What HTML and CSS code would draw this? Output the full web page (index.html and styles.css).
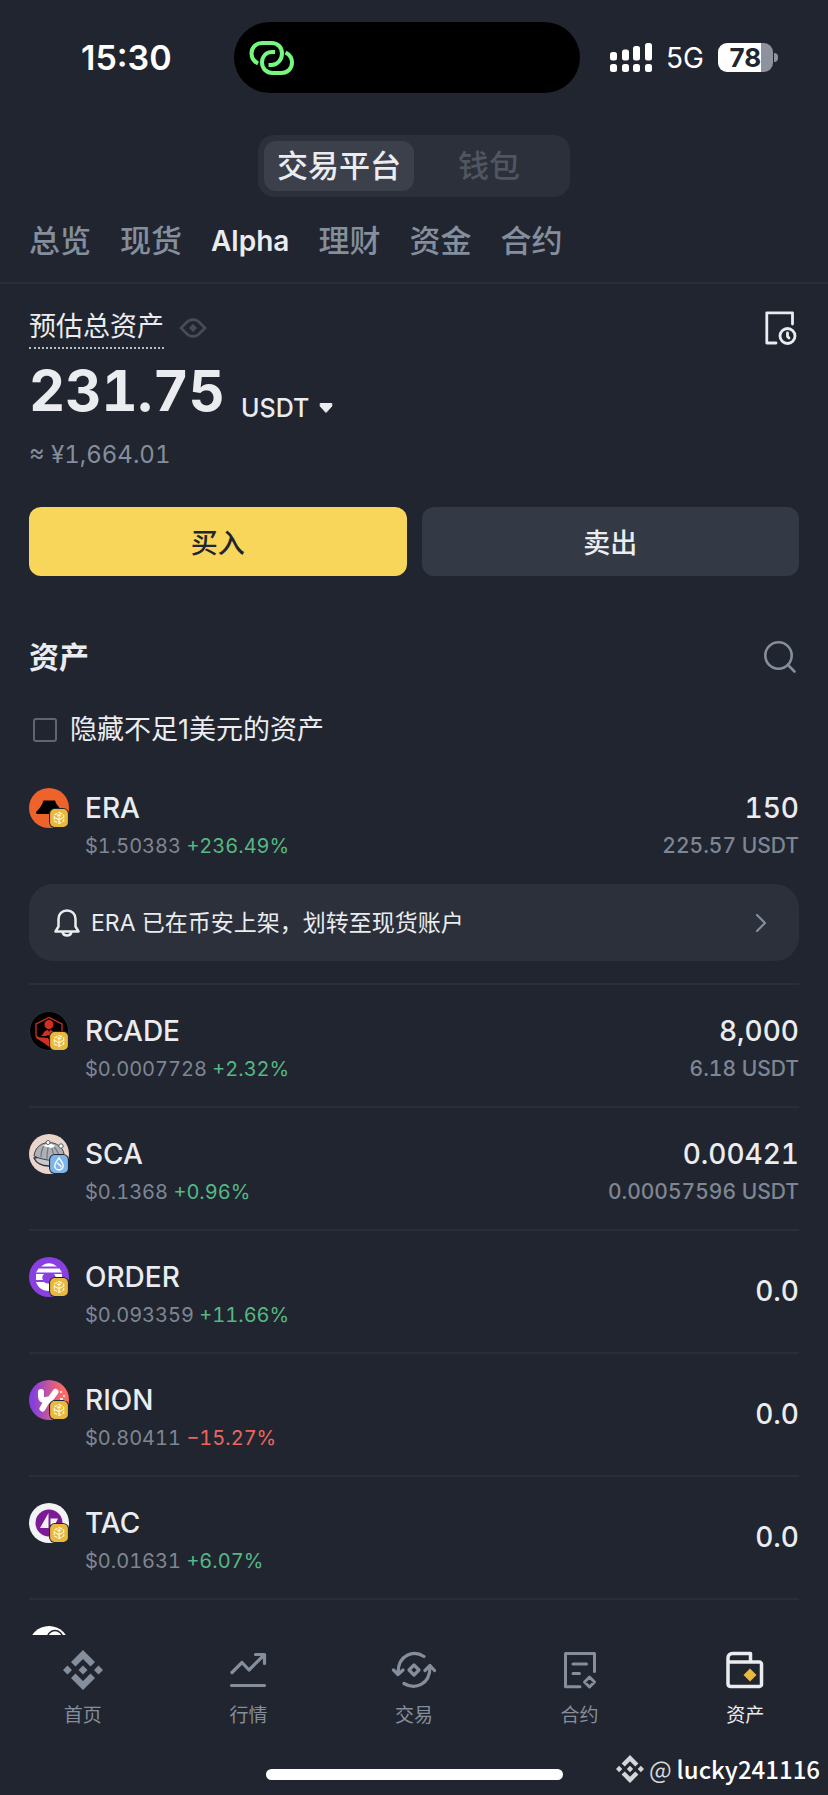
FILE: index.html
```html
<!DOCTYPE html>
<html lang="zh-CN">
<head>
<meta charset="utf-8">
<meta name="viewport" content="width=device-width, initial-scale=1">
<title>资产</title>
<link rel="stylesheet" href="styles.css">
</head>
<body>
<svg class="sprite" aria-hidden="true">
  <symbol id="bnb-badge" viewBox="0 0 18 18">
    <rect x="1" y="1" width="16" height="16" rx="4" fill="#e8b93c"/>
    <path d="M9 4 13.200 6.300v5.400L9 14 4.800 11.700V6.300Z" fill="none" stroke="#fff6d8" stroke-width="1.100" stroke-dasharray="3.200 1"/>
    <path d="M9 5.500 11.200 6.800 9 8 6.800 6.800ZM8.300 8.500h1.400v4.500H8.300ZM5.500 8l2.500 1.400v1.300L5.500 9.300ZM12.500 8 10 9.400v1.300L12.500 9.300Z" fill="#fff6d8"/>
  </symbol>
  <symbol id="sui-badge" viewBox="0 0 18 18">
    <rect x="1" y="1" width="16" height="16" rx="4" fill="#7fb6ea"/>
    <path d="M9 3.500C7.500 6 5.200 8 5.200 10.600a3.800 3.800 0 0 0 7.600 0C12.800 8 10.500 6 9 3.500Z" fill="none" stroke="#fff" stroke-width="1.200"/>
    <path d="M7.500 8c1 2 3.500 1.500 3.500 4.200" fill="none" stroke="#fff" stroke-width="1.200"/>
  </symbol>
  <symbol id="diamond-logo" viewBox="0 0 40 40">
    <path d="M20 0 32 12 27.500 16.500 20 9 12.500 16.500 8 12ZM20 40 8 28 12.500 23.500 20 31 27.500 23.500 32 28ZM4.500 15.500 9 20 4.500 24.500 0 20ZM35.500 15.500 40 20 35.500 24.500 31 20ZM20 15.500 24.500 20 20 24.500 15.500 20Z" fill="currentColor"/>
  </symbol>
</svg>

<div class="app">
  <header class="status">
    <div class="status-time"><time>15:30</time></div>
    <div class="island">
      <svg width="46" height="36" viewBox="0 0 46 36" fill="none" stroke="#76f77e" stroke-width="4" stroke-linecap="butt">
        <path d="M9 23.500C5 21.500 2.500 18 2.500 13.500 2.500 7.500 7 3 13 3h9.500C29 3 33 7.500 33 13.500S28.500 25 22.500 25h-3"/>
        <path d="M26 12h-3C17 12 13 16.500 13 22.500S17.500 33 23.500 33h9C38.500 33 43 28.500 43 22.500c0-4.500-2.500-8-6.500-10"/>
      </svg>
    </div>
    <div class="status-right">
      <svg width="42" height="29" viewBox="0 0 42 29" fill="#fff">
        <rect y="9" width="7" height="8.500" rx="2.500"/><rect x="12" y="6.500" width="7" height="11" rx="2.500"/><rect x="23" y="3" width="7" height="14.500" rx="2.500"/><rect x="35" width="7" height="17.500" rx="2.500"/>
        <rect y="21" width="7" height="8" rx="2.500"/><rect x="12" y="21" width="7" height="8" rx="2.500"/><rect x="23" y="21" width="7" height="8" rx="2.500"/><rect x="35" y="21" width="7" height="8" rx="2.500"/>
      </svg>
      <span class="network">5G</span>
      <span class="battery"><span class="battery-level">78</span></span>
    </div>
  </header>

  <div class="segment-wrap">
    <div class="segment">
      <button class="segment-item segment-active" type="button">交易平台</button>
      <button class="segment-item" type="button">钱包</button>
    </div>
  </div>

  <nav class="tabs">
    <a class="tab" href="#overview">总览</a>
    <a class="tab" href="#spot">现货</a>
    <a class="tab tab-active" href="#alpha">Alpha</a>
    <a class="tab" href="#earn">理财</a>
    <a class="tab" href="#funding">资金</a>
    <a class="tab" href="#futures">合约</a>
  </nav>

  <main class="content">
    <section class="summary">
      <div class="summary-head">
        <span class="summary-label">预估总资产</span>
        <button class="icon-button eye" type="button" aria-label="隐藏余额">
          <svg width="28" height="20" viewBox="0 0 28 20" fill="none" stroke="#474d57" stroke-width="2.600"><path d="M2 10 8.500 3.500C11.500 1 16.500 1 19.500 3.500L26 10 19.500 16.500C16.500 19 11.500 19 8.500 16.500Z"/><path d="M14 6 18 10 14 14 10 10Z" fill="#474d57" stroke="none"/></svg>
        </button>
        <button class="icon-button history" type="button" aria-label="历史记录">
          <svg width="32" height="34" viewBox="0 0 32 34" fill="none" stroke="#eaecef" stroke-width="2.800" stroke-linecap="round" stroke-linejoin="round"><path d="M11 32H1.800V1.800H27.500V13"/><circle cx="22.500" cy="25" r="7.500"/><path d="M22.500 22V25.500l1.500 1.500"/></svg>
        </button>
      </div>
      <div class="balance">
        <span class="balance-value">231.75</span>
        <label class="currency">
          <select class="currency-select" aria-label="计价货币"><option>USDT</option></select>
          <svg width="14" height="10" viewBox="0 0 14 10" fill="#eaecef"><path d="M1.200.5h11.600v2.700L7 9.500 1.200 3.200Z" stroke="#eaecef" stroke-linejoin="round"/></svg>
        </label>
      </div>
      <p class="fiat">≈ ¥1,664.01</p>
      <div class="actions">
        <button class="action action-buy" type="button">买入</button>
        <button class="action action-sell" type="button">卖出</button>
      </div>
    </section>

    <section class="assets">
      <div class="assets-head">
        <h2 class="assets-title">资产</h2>
        <button class="icon-button" type="button" aria-label="搜索">
          <svg width="34" height="34" viewBox="0 0 34 34" fill="none" stroke="#848e9c" stroke-width="2.600" stroke-linecap="round"><circle cx="15.500" cy="15.500" r="13.200"/><path d="M25 25 31.500 31.500"/></svg>
        </button>
      </div>
      <label class="filter"><input class="filter-box" type="checkbox"><span>隐藏不足1美元的资产</span></label>

      <ul class="list">
        <li class="row">
          <div class="coin">
            <svg width="40" height="40" viewBox="0 0 40 40"><circle cx="20" cy="20" r="20" fill="#ee622b"/><path d="M14.500 12.500h11.500c.8 3.500 3.500 5.500 5.500 9v4.500H8.500c-1.500 0-1.800-1.500-1-2.500 3-3 5.500-6 7-11Z"/></svg>
            <svg class="coin-badge" width="20" height="20"><use href="#bnb-badge"/></svg>
          </div>
          <div class="coin-text"><h3 class="name">ERA</h3><p class="sub">$1.50383 <span class="up">+236.49%</span></p></div>
          <div class="holding"><p class="name">150</p><p class="value">225.57 USDT</p></div>
          <a class="notice" href="#transfer">
            <svg width="26" height="28" viewBox="0 0 26 28" fill="none" stroke="#eaecef" stroke-width="2.500" stroke-linejoin="round"><path d="M1.500 22.500 4.500 17.500V10C4.500 5 8 1.500 13 1.500S21.500 5 21.500 10v7.500l3 5Z"/><path d="M8.500 23c.5 2.500 2 3.500 4.500 3.500s4-1 4.500-3.500"/></svg>
            <span class="notice-text">ERA 已在币安上架，划转至现货账户</span>
            <svg width="12" height="20" viewBox="0 0 12 20" fill="none" stroke="#848e9c" stroke-width="2.200" stroke-linecap="round" stroke-linejoin="round"><path d="M2 2 10 10 2 18"/></svg>
          </a>
        </li>
        <li class="row">
          <div class="coin">
            <svg width="40" height="40" viewBox="0 0 40 40"><circle cx="20" cy="20" r="19.500" stroke="#2b313c"/><path d="M7 25V13L20 6.500 33 13V25L20 35Z" fill="none" stroke="#d22f22" stroke-width="1.300"/><path d="M20 9a4.500 4.500 0 1 1-.1 9 4.500 4.500 0 0 1 .1-9ZM11 25c4 0 2-5 8-6l1 2 1-2c5 1 3 4 5 5l-5 1-2-1-2 1ZM7 26l12 1 4 7-3 1-13-8Z" fill="#d22f22"/></svg>
            <svg class="coin-badge" width="20" height="20"><use href="#bnb-badge"/></svg>
          </div>
          <div class="coin-text"><h3 class="name">RCADE</h3><p class="sub">$0.0007728 <span class="up">+2.32%</span></p></div>
          <div class="holding"><p class="name">8,000</p><p class="value">6.18 USDT</p></div>
        </li>
        <li class="row">
          <div class="coin">
            <svg width="40" height="40" viewBox="0 0 40 40"><circle cx="20" cy="20" r="20" fill="#ead5cb"/><path d="M5 24c2 5 8 8 15 8s12-3 14-8l-4-4Z" fill="#c7c9cd" stroke="#2e3340" stroke-width="1.300"/><path d="M5 22C6 13 13 8.500 20 8.500S34 13 35 20c-2 5-6 7-10 7-7-1-14-2-20-5Z" fill="#aeb1b6" stroke="#3a404b"/><path d="M12 23c0-6 1-9 4-12M18 25c0-6 0-9 2-14M24 26c1-6 0-10-2-14M30 24c0-5-2-8-5-11" fill="none" stroke="#747982" stroke-width="1.200"/><path d="M14 12c4-3 8-3 12 0l-3 2-5-1Z" fill="#fff"/><circle cx="19" cy="8.500" r="2" fill="#fff" stroke="#555b66"/><circle cx="32" cy="12" r="2.200" fill="#fff" stroke="#555b66"/></svg>
            <svg class="coin-badge" width="20" height="20"><use href="#sui-badge"/></svg>
          </div>
          <div class="coin-text"><h3 class="name">SCA</h3><p class="sub">$0.1368 <span class="up">+0.96%</span></p></div>
          <div class="holding"><p class="name">0.00421</p><p class="value">0.00057596 USDT</p></div>
        </li>
        <li class="row">
          <div class="coin">
            <svg width="40" height="40" viewBox="0 0 40 40"><circle cx="20" cy="20" r="20" fill="#8a3fe0"/><path fill="#fff" d="M12 9.500C17 5 23 5 28 9.500ZM9.500 11.500h21L33 15.500H7ZM7 17h8c-2 2-2 4-1 6H7ZM25 17h8v6h-7c1-2 1-4-1-6ZM7 25h8c3 2 7 2 10 0h8c-2 6-7 9-13 9S9 31 7 25Z"/></svg>
            <svg class="coin-badge" width="20" height="20"><use href="#bnb-badge"/></svg>
          </div>
          <div class="coin-text"><h3 class="name">ORDER</h3><p class="sub">$0.093359 <span class="up">+11.66%</span></p></div>
          <div class="holding"><p class="name name-single">0.0</p></div>
        </li>
        <li class="row">
          <div class="coin">
            <svg width="40" height="40" viewBox="0 0 40 40"><defs><linearGradient id="rion" x1="0" y1="0" x2="1" y2="0"><stop offset=".1" stop-color="#8540dc"/><stop offset=".85" stop-color="#ff6a62"/></linearGradient></defs><circle cx="20" cy="20" r="20" fill="url(#rion)"/><g stroke="#fff" stroke-width="6" stroke-linecap="round" fill="none"><path d="M12 12v4c0 4 3 5 6.500 3.500M26.500 12 20.500 20M18.500 20 13.500 28.500"/></g><path d="M31 12h2M34 16h2M31 19h3M35 21h2" stroke="#fff" stroke-width="1.500"/></svg>
            <svg class="coin-badge" width="20" height="20"><use href="#bnb-badge"/></svg>
          </div>
          <div class="coin-text"><h3 class="name">RION</h3><p class="sub">$0.80411 <span class="down">−15.27%</span></p></div>
          <div class="holding"><p class="name name-single">0.0</p></div>
        </li>
        <li class="row">
          <div class="coin">
            <svg width="40" height="40" viewBox="0 0 40 40"><circle cx="20" cy="20" r="20" fill="#f3f3f6"/><circle cx="20" cy="20" r="13.500" fill="#7d1b96"/><path d="M19.500 10v15H11ZM21.500 15.500h7.500l-3 6-4.500.5Z" fill="#f3f3f6"/></svg>
            <svg class="coin-badge" width="20" height="20"><use href="#bnb-badge"/></svg>
          </div>
          <div class="coin-text"><h3 class="name">TAC</h3><p class="sub">$0.01631 <span class="up">+6.07%</span></p></div>
          <div class="holding"><p class="name name-single">0.0</p></div>
        </li>
        <li class="row">
          <div class="coin">
            <svg width="40" height="40" viewBox="0 0 40 40"><circle cx="20" cy="20" r="20" fill="#fff"/><circle cx="26" cy="12" r="7.500" fill="none" stroke="#21252f" stroke-width="1.500"/></svg>
          </div>
        </li>
      </ul>
    </section>
  </main>

  <footer class="bottom">
    <nav class="dock">
      <a class="dock-item" href="#home"><svg width="40" height="40"><use href="#diamond-logo"/></svg><span>首页</span></a>
      <a class="dock-item" href="#markets"><svg width="40" height="40" viewBox="0 0 40 40" fill="none" stroke="currentColor" stroke-width="3.200" stroke-linecap="round" stroke-linejoin="round"><path d="M4 22.500 14 12.500 21 20 36 5M27.500 4.500H36.500V13.500M3.500 35.500h33"/></svg><span>行情</span></a>
      <a class="dock-item" href="#trade"><svg width="46" height="40" viewBox="0 0 46 40" fill="none" stroke="currentColor" stroke-width="3.200" stroke-linecap="round" stroke-linejoin="round"><path d="M33 6.500C23 0 7 4 7 23M2.500 20 7 24.500 12 20M13 33.500C24 40 39 35 39 17M34 20.500 39 15.500 43.500 20.500"/><path d="M23 15 28 20 23 25 18 20Z"/></svg><span>交易</span></a>
      <a class="dock-item" href="#futures"><svg width="40" height="40" viewBox="0 0 40 40" fill="none" stroke="currentColor" stroke-width="3" stroke-linecap="round" stroke-linejoin="round"><path d="M20 36.800H5.500V3.500H34.500V21.500M13 14H26.500M13 23.500H19.500M29.500 27 34.500 32 29.500 37 24.500 32Z"/></svg><span>合约</span></a>
      <a class="dock-item dock-active" href="#assets"><svg width="40" height="40" viewBox="0 0 40 40" fill="none" stroke="currentColor" stroke-width="3.500" stroke-linejoin="round"><path d="M3 12V33.500c0 1.800 1.200 3 3 3H34.500c1 0 2-1 2-2V14c0-1-1-2-2-2H3V8c0-2.500 1.800-4.500 4.500-4.500H25.500V12"/><path d="M25 18.500 31.500 25 25 31.500 18.500 25Z" fill="#e8b93c" stroke="none"/></svg><span>资产</span></a>
    </nav>
    <div class="home-indicator"></div>
    <p class="watermark"><svg width="28" height="28"><use href="#diamond-logo"/></svg><span class="watermark-at">@</span><span>lucky241116</span></p>
  </footer>
</div>
</body>
</html>
```

FILE: styles.css
```css
* { box-sizing: border-box; }

body {
  margin: 0;
  background: #21252f;
  color: #eaecef;
  font-family: Inter, "Noto Sans CJK SC", sans-serif;
}

h2, h3, p, ul { margin: 0; padding: 0; }
ul { list-style: none; }
a { color: inherit; text-decoration: none; }
svg { display: block; flex: none; }
button, select { font: inherit; color: inherit; background: none; border: 0; padding: 0; cursor: pointer; }

.sprite { position: absolute; width: 0; height: 0; }

.app { display: flex; flex-direction: column; height: 100vh; }

/* Status bar */
.status {
  display: grid;
  grid-template-columns: 234fr 346px 248fr;
  align-items: center;
  padding-top: 22px;
}
.status-time { padding-left: 81px; font-size: 34px; font-weight: 600; line-height: 40px; color: #fff; }
.island { display: flex; align-items: center; height: 71px; padding: 0 15px; border-radius: 36px; background: #000; }
.status-right { display: flex; align-items: center; gap: 14px; padding-left: 30px; color: #fff; }
.network { font-size: 28px; line-height: 32px; }
.battery {
  position: relative;
  width: 55px;
  border-radius: 9px;
  background: linear-gradient(90deg, #fff 43px, #8e929e 43px);
}
.battery::after {
  content: "";
  position: absolute;
  left: 56px;
  top: 10px;
  width: 4px;
  height: 9px;
  border-radius: 0 4px 4px 0;
  background: #8e929e;
}
.battery-level { display: block; text-align: center; font-size: 26px; font-weight: 700; line-height: 29px; color: #21252f; }

/* Platform switch and tabs */
.segment-wrap { display: flex; justify-content: center; padding: 42px 0 22px; }
.segment { display: flex; padding: 6px; border-radius: 16px; background: #2b303b; }
.segment-item { width: 150px; height: 50px; border-radius: 12px; font-size: 31px; font-weight: 500; line-height: 50px; color: #50555f; }
.segment-active { background: #3b404b; color: #eaecef; }

.tabs { display: flex; gap: 29px; padding: 0 29px 19px; border-bottom: 2px solid #292e38; }
.tab { font-size: 31px; font-weight: 500; line-height: 44px; color: #848e9c; }
.tab-active { font-size: 28px; font-weight: 600; color: #eaecef; }

/* Scrolling content */
.content { flex: 1; min-height: 0; overflow-y: auto; padding: 0 29px; scrollbar-width: none; }

.icon-button { display: flex; }
.summary { padding-top: 23px; }
.summary-head { display: flex; align-items: center; }
.summary-label { border-bottom: 2px dotted #b7bdc6; font-size: 27px; line-height: 40px; }
.eye { margin-left: 15px; }
.history { margin-left: auto; margin-right: 2px; }
.balance { display: flex; align-items: flex-end; gap: 16px; padding-top: 7px; font-variant-numeric: tabular-nums; }
.balance-value { font-size: 56px; font-weight: 700; line-height: 70px; }
.currency { display: flex; align-items: center; gap: 9px; padding-bottom: 2px; }
.currency-select { appearance: none; font-size: 25px; font-weight: 500; line-height: 32px; }
.fiat { padding: 11px 0 34px; font-size: 24px; line-height: 36px; color: #848e9c; font-variant-numeric: tabular-nums; }
.actions { display: grid; grid-template-columns: 1fr 1fr; gap: 15px; }
.action { height: 69px; border-radius: 12px; font-size: 27px; font-weight: 500; }
.action-buy { background: #f8d65a; color: #21252f; }
.action-sell { background: #343a45; }

.assets { padding-top: 59px; }
.assets-head { display: flex; align-items: center; justify-content: space-between; padding-right: 2px; }
.assets-title { font-size: 30px; font-weight: 700; line-height: 44px; }
.filter { display: flex; align-items: center; gap: 13px; padding: 31px 4px 32px; font-size: 27px; line-height: 40px; }
.filter-box { appearance: none; width: 24px; height: 24px; margin: 0; border: 2px solid #5e6673; border-radius: 3px; }

/* Asset rows */
.list { font-variant-numeric: tabular-nums; }
.row {
  display: grid;
  grid-template-columns: 40px 1fr auto;
  column-gap: 16px;
  padding: 26px 0 19px;
  border-bottom: 2px solid #292e38;
}
.row:first-child { padding: 6px 0 22px; }
.coin { position: relative; width: 40px; height: 40px; }
.coin-badge { position: absolute; right: 0; bottom: 0; border-radius: 6px; background: #21252f; }
.name { font-size: 28px; font-weight: 500; line-height: 40px; }
.name-single { line-height: 68px; }
.sub { font-size: 20px; line-height: 36px; color: #7f8693; }
.value { font-size: 21px; font-weight: 500; line-height: 36px; color: #7f8693; }
.holding { text-align: right; }
.up { color: #55b884; }
.down { color: #ee6560; }

.notice {
  grid-column: 1 / -1;
  display: flex;
  align-items: center;
  gap: 11px;
  height: 77px;
  margin-top: 20px;
  padding: 0 32px 0 25px;
  border-radius: 24px;
  background: #2b303b;
}
.notice-text { flex: 1; font-size: 23px; line-height: 36px; }

/* Bottom navigation */
.bottom { position: relative; background: #21252f; padding: 15px 0; }
.dock { display: grid; grid-template-columns: repeat(5, 1fr); }
.dock-item { display: flex; flex-direction: column; align-items: center; gap: 12px; font-size: 19px; line-height: 28px; color: #848e9c; }
.dock-active { color: #eaecef; }
.home-indicator { width: 297px; height: 11px; margin: 39px auto 0; border-radius: 6px; background: #fff; }
.watermark {
  position: absolute;
  right: 8px;
  bottom: 8px;
  display: flex;
  align-items: center;
  gap: 5px;
  font-family: "Noto Sans CJK SC", sans-serif;
  font-size: 24px;
  font-weight: 500;
  line-height: 36px;
  color: #fff;
}
.watermark svg, .watermark-at { color: #d5d6d8; }
.watermark-at { font-weight: 400; }
```
